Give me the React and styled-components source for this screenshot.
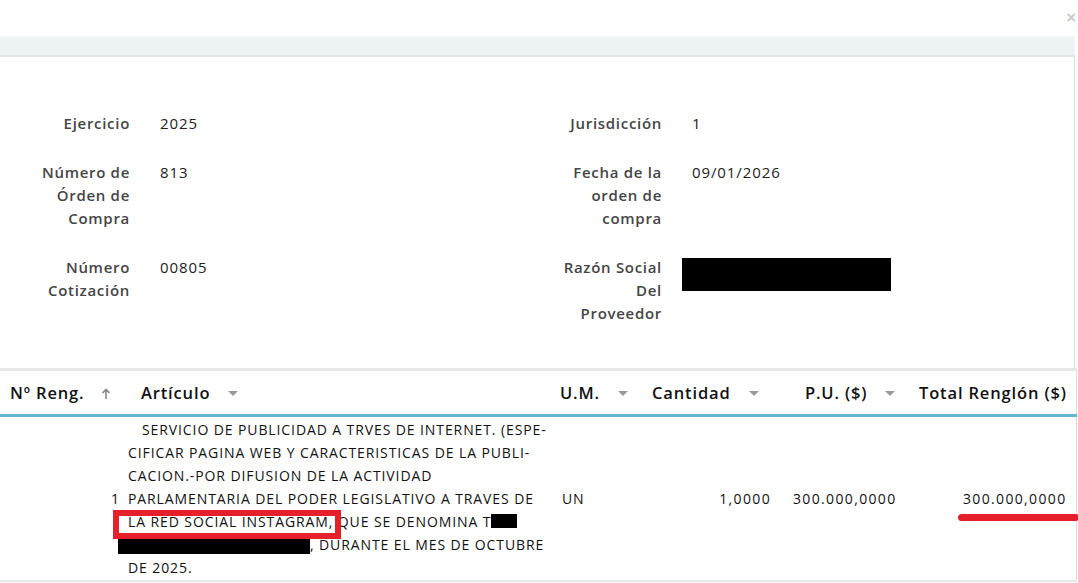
import React from "react";
import styled, { createGlobalStyle } from "styled-components";

const Global = createGlobalStyle`
  html, body { margin: 0; padding: 0; background: #fff; }
  body { font-family: "Open Sans", "DejaVu Sans", sans-serif; color: #222; overflow: hidden; }
  * { box-sizing: border-box; }
`;

const Page = styled.div`
  width: 1078px;
  height: 583px;
  position: relative;
  overflow: hidden;
  background: #fff;
`;

const TopBar = styled.div`
  height: 36px;
  display: flex;
  justify-content: flex-end;
  align-items: center;
  padding-bottom: 2px;
`;

const Close = styled.span`
  font-family: "DejaVu Sans", sans-serif;
  font-size: 14px;
  font-weight: 700;
  color: #c8c8c8;
  margin-right: 1px;
  line-height: 1;
`;

const Band = styled.div`
  height: 21px;
  width: 1075px;
  background: #edf2f5;
  border-top: 1px solid #f3f6f8;
  border-bottom: 2px solid #e2e7ea;
`;

const Body = styled.div`
  width: 1075px;
  border-right: 1px solid #dcdcdc;
  padding: 55px 0 0 0;
  height: 311px;
`;

const Form = styled.div`
  display: grid;
  grid-template-columns: 532px 1fr;
`;

const Column = styled.div`
  display: flex;
  flex-direction: column;
  gap: 26px;
`;

const Field = styled.div`
  display: grid;
  grid-template-columns: ${(p) => p.$labelW}px 1fr;
  column-gap: 30px;
  font-size: 15px;
  line-height: 23px;
`;

const Label = styled.div`
  text-align: right;
  font-weight: 600;
  color: #454545;
  letter-spacing: 0.7px;
`;

const Value = styled.div`
  color: #222;
  letter-spacing: 0.9px;
`;

const Redacted = styled.div`
  width: 209px;
  height: 33px;
  background: #000;
  margin-top: 2px;
  margin-left: -10px;
`;

const Table = styled.table`
  width: 1076px;
  border-collapse: collapse;
  table-layout: fixed;
  border-top: 3px solid #e6e6e6;
  border-right: 1px solid #dcdcdc;
`;

const Th = styled.th`
  height: 46px;
  text-align: left;
  font-size: 16.5px;
  font-weight: 600;
  letter-spacing: 0.85px;
  color: #111;
  padding: 0 0 0 ${(p) => p.$pl || 0}px;
  border-bottom: 3px solid #62b6d2;
  white-space: nowrap;
`;

const HeadInner = styled.span`
  display: inline-flex;
  align-items: center;
  gap: ${(p) => p.$gap || 18}px;
`;

const Caret = styled.span`
  width: 0;
  height: 0;
  border-left: 5px solid transparent;
  border-right: 5px solid transparent;
  border-top: 5px solid #999;
  margin-top: 2px;
`;

const Td = styled.td`
  vertical-align: middle;
  font-size: 14px;
  line-height: 23px;
  color: #111;
  letter-spacing: ${(p) => (p.$num ? 1.35 : 0.9)}px;
  text-align: ${(p) => p.$align || "left"};
  padding: 1px ${(p) => p.$pr || 0}px 1px ${(p) => p.$pl || 0}px;
  border-bottom: 2px solid #e8e8e8;
`;

const Article = styled.div`
  position: relative;
  white-space: nowrap;
`;

const Indent = styled.span`
  padding-left: 14px;
`;

const Black = styled.span`
  display: inline-block;
  background: #000;
  vertical-align: ${(p) => p.$va || 0}px;
  width: ${(p) => p.$w}px;
  height: ${(p) => p.$h}px;
  margin-left: ${(p) => p.$ml || 0}px;
`;

const RedBox = styled.div`
  position: absolute;
  left: -15px;
  top: 92px;
  width: 228px;
  height: 29px;
  border: 6px solid #e5202a;
  pointer-events: none;
`;

const RedLine = styled.div`
  position: absolute;
  right: -12px;
  bottom: -11px;
  width: 121px;
  height: 7px;
  border-radius: 3.5px;
  background: #e5202a;
`;

const TotalWrap = styled.span`
  position: relative;
  display: inline-block;
`;

const Arrow = () => (
  <svg width="10" height="12" viewBox="0 0 10 12" style={{ marginTop: 2 }}>
    <path d="M5 11V1.5M1.5 5L5 1.5 8.5 5" stroke="#888" strokeWidth="1.6" fill="none" />
  </svg>
);

export default function App() {
  return (
    <Page>
      <Global />
      <TopBar>
        <Close>×</Close>
      </TopBar>
      <Band />
      <Body>
        <Form>
          <Column>
            <Field $labelW={130}>
              <Label>Ejercicio</Label>
              <Value>2025</Value>
            </Field>
            <Field $labelW={130}>
              <Label>Número de<br />Órden de<br />Compra</Label>
              <Value>813</Value>
            </Field>
            <Field $labelW={130}>
              <Label>Número<br />Cotización</Label>
              <Value>00805</Value>
            </Field>
          </Column>
          <Column>
            <Field $labelW={130}>
              <Label>Jurisdicción</Label>
              <Value>1</Value>
            </Field>
            <Field $labelW={130}>
              <Label>Fecha de la<br />orden de<br />compra</Label>
              <Value>09/01/2026</Value>
            </Field>
            <Field $labelW={130}>
              <Label>Razón Social<br />Del<br />Proveedor</Label>
              <Value><Redacted /></Value>
            </Field>
          </Column>
        </Form>
      </Body>
      <Table>
        <colgroup>
          <col style={{ width: 128 }} />
          <col style={{ width: 422 }} />
          <col style={{ width: 90 }} />
          <col style={{ width: 150 }} />
          <col style={{ width: 115 }} />
          <col style={{ width: 171 }} />
        </colgroup>
        <thead>
          <tr>
            <Th $pl={10}><HeadInner $gap={17}>Nº Reng. <Arrow /></HeadInner></Th>
            <Th $pl={13}><HeadInner>Artículo <Caret /></HeadInner></Th>
            <Th $pl={10}><HeadInner>U.M. <Caret /></HeadInner></Th>
            <Th $pl={12}><HeadInner>Cantidad <Caret /></HeadInner></Th>
            <Th $pl={15}><HeadInner>P.U. ($) <Caret /></HeadInner></Th>
            <Th $pl={14}>Total Renglón ($)</Th>
          </tr>
        </thead>
        <tbody>
          <tr>
            <Td $align="right" $pr={8}>1</Td>
            <Td>
              <Article>
                <Indent>SERVICIO DE PUBLICIDAD A TRVES DE INTERNET. (ESPE-</Indent><br />
                CIFICAR PAGINA WEB Y CARACTERISTICAS DE LA PUBLI-<br />
                CACION.-POR DIFUSION DE LA ACTIVIDAD<br />
                PARLAMENTARIA DEL PODER LEGISLATIVO A TRAVES DE<br />
                LA RED SOCIAL INSTAGRAM, QUE SE DENOMINA T<Black $w={26} $h={14} $va={-1} /><br />
                <Black $w={192} $h={18} $va={-4} $ml={-10} />, DURANTE EL MES DE OCTUBRE<br />
                DE 2025.
                <RedBox />
              </Article>
            </Td>
            <Td $pl={12}>UN</Td>
            <Td $num $align="right" $pr={19}>1,0000</Td>
            <Td $num $pl={3}>300.000,0000</Td>
            <Td $num $align="right" $pr={9}>
              <TotalWrap>
                300.000,0000
                <RedLine />
              </TotalWrap>
            </Td>
          </tr>
        </tbody>
      </Table>
    </Page>
  );
}
